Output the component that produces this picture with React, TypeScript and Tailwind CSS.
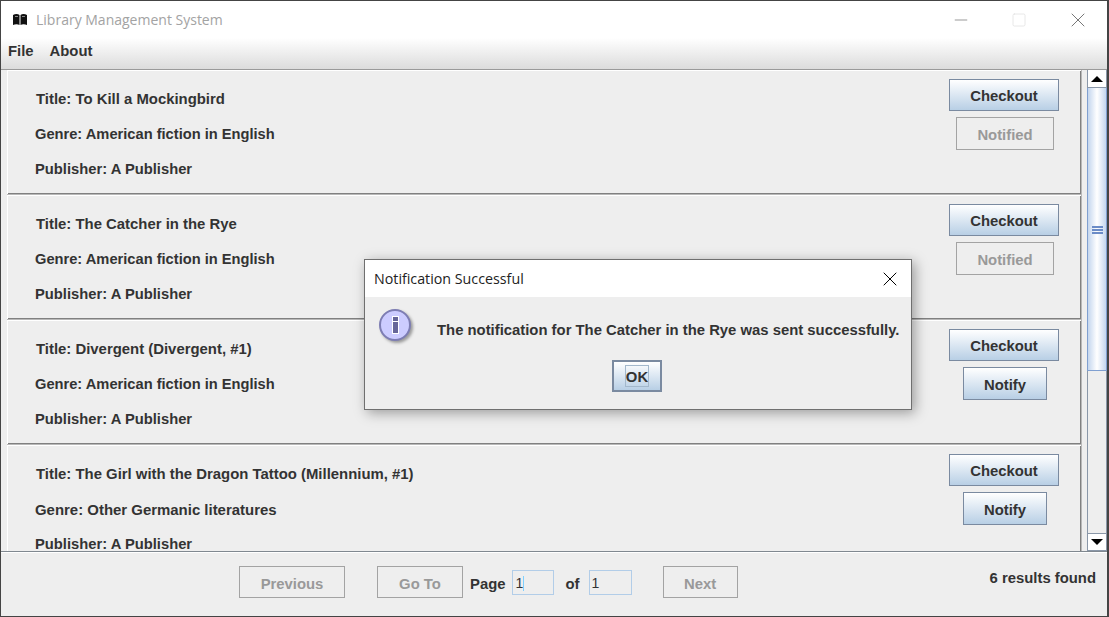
import { X, Minus, Square } from "lucide-react";

const books = [
  { title: "To Kill a Mockingbird", genre: "American fiction in English", notified: true },
  { title: "The Catcher in the Rye", genre: "American fiction in English", notified: true },
  { title: "Divergent (Divergent, #1)", genre: "American fiction in English", notified: false },
  { title: "The Girl with the Dragon Tattoo (Millennium, #1)", genre: "Other Germanic literatures", notified: false },
];

const blueBtn =
  "flex items-center justify-center border border-[#7a8aa0] bg-gradient-to-b from-[#ffffff] to-[#b8cfe5] pt-[3px] text-[14.85px] font-bold text-[#333333]";
const offBtn =
  "flex items-center justify-center border border-[#a3a3a3] pt-[3px] text-[14.85px] font-bold text-[#999999]";

const BookIcon = () => (
  <svg width="16" height="13" viewBox="0 0 16 13">
    <path d="M1 2 C3 0.5 6 0.5 7.5 2 V12 C6 11 3 11 1 12 Z" fill="#111" />
    <path d="M15 2 C13 0.5 10 0.5 8.5 2 V12 C10 11 13 11 15 12 Z" fill="#111" />
    <path d="M3 3.5 H6 M10 3.5 H13" stroke="#888" strokeWidth="1" />
  </svg>
);

const BookCard = ({ book }: any) => {
  return (
    <div className="flex h-[125px] w-full shrink-0 justify-between border-b border-r border-[#b8b8b8] bg-[#eeeeee] pl-[28px] pr-[22px] shadow-[inset_1px_1px_0_#ffffff,inset_-1px_-1px_0_#808080]">
      <div className="flex flex-col pt-[21px] text-[14.9px] font-bold leading-[17px] text-[#333333]">
        <div className="pl-px">Title: {book.title}</div>
        <div className={`mt-[18px] ${book.genre.startsWith("Other") ? "text-[14.95px]" : "text-[14.67px]"}`}>
          Genre: {book.genre}
        </div>
        <div className="mt-[18px] text-[14.75px]">Publisher: A Publisher</div>
      </div>
      <div className="flex w-[110px] flex-col items-center pt-[9px]">
        <button className={`${blueBtn} h-[32px] w-[110px]`}>Checkout</button>
        {book.notified ? (
          <button className={`${offBtn} ml-[2px] mt-[6px] h-[33px] w-[98px]`}>Notified</button>
        ) : (
          <button className={`${blueBtn} ml-[2px] mt-[6px] h-[33px] w-[84px]`}>Notify</button>
        )}
      </div>
    </div>
  );
};

const ScrollBar = () => (
  <div className="flex w-[20px] shrink-0 flex-col bg-[#eeeeee]">
    <div className="flex h-[18px] shrink-0 items-center justify-center border-x border-b border-[#8a97a8] bg-white">
      <div className="h-0 w-0 border-x-[6px] border-b-[6px] border-x-transparent border-b-black" />
    </div>
    <div className="flex h-[283px] shrink-0 items-center justify-center border-x border-b border-[#7f9fd0] bg-gradient-to-r from-[#c4d6ee] via-white to-[#c4d6ee] pt-[2px]">
      <div className="flex w-[11px] flex-col gap-px">
        <div className="h-[2px] bg-[#6b8cc7]" />
        <div className="h-[2px] bg-[#6b8cc7]" />
        <div className="h-[2px] bg-[#6b8cc7]" />
      </div>
    </div>
    <div className="flex-1 border-x border-[#8a97a8]" />
    <div className="flex h-[18px] shrink-0 items-center justify-center border-x border-y border-[#8a97a8] bg-white">
      <div className="h-0 w-0 border-x-[6px] border-t-[6px] border-x-transparent border-t-black" />
    </div>
  </div>
);

export default function App() {
  return (
    <div className="relative flex h-[617px] w-[1109px] flex-col overflow-hidden border border-r-2 border-[#444444] bg-[#eeeeee] font-['Liberation_Sans',Arial,sans-serif]">
      {/* title bar */}
      <div className="flex h-[37px] shrink-0 items-center bg-white pl-[11px]">
        <BookIcon />
        <span className="ml-[8px] font-['Open_Sans','Noto_Sans',sans-serif] text-[14px] text-[#a3a3a3]">
          Library Management System
        </span>
        <div className="ml-auto flex items-center">
          <Minus size={20} strokeWidth={1.2} className="mr-[40px] text-[#999999]" />
          <Square size={16} strokeWidth={1} className="mr-[39px] text-[#dddddd]" />
          <X size={24} strokeWidth={1} className="mr-[17px] text-[#777777]" />
        </div>
      </div>

      {/* menu */}
      <div className="flex h-[31px] shrink-0 items-center gap-[16px] bg-gradient-to-b from-white to-[#dcdcdc] pb-[5px] pl-[7px] text-[14.85px] font-bold text-[#333333]">
        <span>File</span>
        <span>About</span>
      </div>

      {/* list and scrollbar */}
      <div className="flex h-[483px] shrink-0 border-y border-t-[#9a9a9a] border-b-[#808890] pl-[6px]">
        <div className="flex flex-1 flex-col overflow-hidden">
          {books.map((b) => (
            <BookCard key={b.title} book={b} />
          ))}
        </div>
        <div className="w-[5px] shrink-0" />
        <ScrollBar />
      </div>

      {/* pager */}
      <div className="flex flex-1 border-t border-white pl-[238px] pr-[11px] pt-[13px] text-[14.85px] font-bold text-[#333333]">
        <button className={`${offBtn} h-[32px] w-[106px] !pt-[4px]`}>Previous</button>
        <button className={`${offBtn} ml-[32px] h-[32px] w-[86px] !pt-[4px]`}>Go To</button>
        <div className="ml-[7px] mt-[7px]">Page</div>
        <div className="ml-[7px] mt-[4px] flex h-[25px] w-[42px] items-center border border-[#b2cde8] pl-[2px] pt-px text-[14px] font-normal">
          1
          <span className="h-[15px] w-px bg-[#7fd0ff]" />
        </div>
        <div className="ml-[11px] mt-[7px]">of</div>
        <div className="ml-[9px] mt-[4px] flex h-[25px] w-[43px] items-center border border-[#b2cde8] pl-[2px] pt-px text-[14px] font-normal">
          1
        </div>
        <button className={`${offBtn} ml-[31px] h-[32px] w-[75px] !pt-[4px]`}>Next</button>
        <div className="ml-auto mt-[1px]">6 results found</div>
      </div>

      {/* dialog */}
      <div className="absolute left-[363px] top-[258px] flex h-[151px] w-[548px] flex-col border border-[#6f6f6f] bg-[#eeeeee] shadow-[3px_3px_12px_rgba(0,0,0,0.35)]">
        <div className="flex h-[37px] shrink-0 items-center justify-between bg-white pl-[9px] pr-[9px]">
          <span className="font-['Open_Sans','Noto_Sans',sans-serif] text-[14.25px] text-[#222222]">
            Notification Successful
          </span>
          <X size={24} strokeWidth={1} className="text-black" />
        </div>
        <div className="relative flex flex-1 flex-col items-center">
          <div className="flex w-full pl-[14px] pt-[12px]">
            <div className="flex h-[32px] w-[32px] items-center justify-center rounded-full border-2 border-[#7d7db3] bg-[#ccccff] shadow-[2px_2px_3px_rgba(0,0,0,0.35)]">
              <div className="flex w-[7px] flex-col gap-px border border-white bg-white">
                <div className="h-[4px] bg-[#666699]" />
                <div className="h-[11px] bg-[#666699]" />
              </div>
            </div>
            <div className="ml-[26px] mt-[13px] text-[14.85px] font-bold leading-[17px] text-[#333333]">
              The notification for The Catcher in the Rye was sent successfully.
            </div>
          </div>
          <button className="relative mr-[2px] mt-[19px] flex h-[32px] w-[50px] items-center justify-center border-2 border-[#7a8aa0] bg-gradient-to-b from-white to-[#b8cfe5] pt-[2px] text-[14.85px] font-bold text-[#333333]">
            OK
            <span className="absolute left-[11px] top-[3px] h-[22px] w-[24px] border border-[#a3b8cc]" />
          </button>
        </div>
      </div>
    </div>
  );
}
